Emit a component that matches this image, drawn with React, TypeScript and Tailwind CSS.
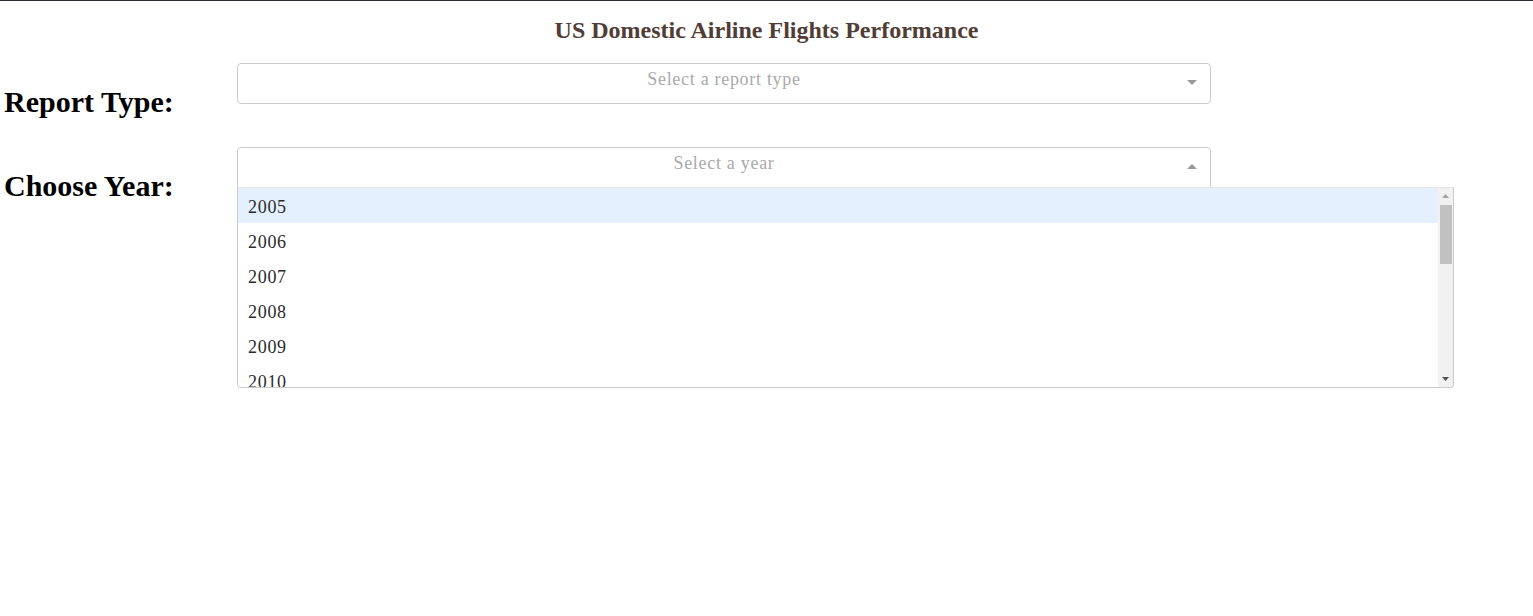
import React from "react";

const serif = { fontFamily: '"Liberation Serif", "Times New Roman", serif' };

function Arrow({ up }: { up?: boolean }) {
  return (
    <svg width="10" height="5" viewBox="0 0 10 5" className="block">
      {up ? <polygon points="0,5 10,5 5,0" fill="#999" /> : <polygon points="0,0 10,0 5,5" fill="#999" />}
    </svg>
  );
}

export default function App() {
  const years = ["2005", "2006", "2007", "2008", "2009", "2010", "2011", "2012"];
  return (
    <div className="min-h-[616px] bg-white text-black" style={serif}>
      <div className="h-px bg-[#2b2d35]" />
      <h1 className="pt-[15px] mb-[19px] text-center text-[24px] leading-[28px] font-bold text-[#503D36]">
        US Domestic Airline Flights Performance
      </h1>

      <div className="flex h-[84px]">
        <div className="w-[237px] shrink-0 pl-[4px] pt-[22px] text-[30px] leading-[33px] font-bold">Report Type:</div>
        <div className="w-[974px] h-[41px] border border-[#ccc] rounded-[4px] flex">
          <div className="flex-1 pl-[31px] text-center text-[18px] tracking-[0.7px] leading-[20px] pt-[5px] text-[#aaa]">Select a report type</div>
          <div className="w-[31px] flex items-start justify-start pt-[16px] pl-[8px]">
            <Arrow />
          </div>
        </div>
      </div>

      <div className="flex h-[84px]">
        <div className="w-[237px] shrink-0 pl-[4px] pt-[22px] text-[30px] leading-[33px] font-bold">Choose Year:</div>
        <div className="relative">
          <div className="w-[974px] h-[41px] border border-[#ccc] rounded-t-[4px] flex bg-white">
            <div className="flex-1 pl-[31px] text-center text-[18px] tracking-[0.7px] leading-[20px] pt-[5px] text-[#aaa]">Select a year</div>
            <div className="w-[31px] flex items-start justify-start pt-[16px] pl-[8px]">
              <Arrow up />
            </div>
          </div>
          <div className="absolute left-0 top-[40px] w-[1217px] h-[201px] border border-[#ccc] border-t-[#e6e6e6] rounded-b-[4px] bg-white flex overflow-hidden">
            <div className="flex-1 overflow-hidden">
              {years.map((y, i) => (
                <div
                  key={y}
                  className={`h-[35px] pl-[10px] pt-[10px] text-[18px] tracking-[0.7px] leading-[18px] text-[#2a2a2a] ${i === 0 ? "bg-[#e4f0fd]" : ""}`}
                >
                  {y}
                </div>
              ))}
            </div>
            <div className="w-[15px] bg-[#f1f1f1] flex flex-col items-center">
              <div className="h-[16px] flex items-center justify-center">
                <svg width="7" height="4" viewBox="0 0 7 4"><polygon points="0,4 7,4 3.5,0" fill="#a3a3a3" /></svg>
              </div>
              <div className="w-[12px] h-[59px] mt-[1px] bg-[#c1c1c1]" />
              <div className="flex-1" />
              <div className="h-[16px] flex items-center justify-center">
                <svg width="7" height="4" viewBox="0 0 7 4"><polygon points="0,0 7,0 3.5,4" fill="#505050" /></svg>
              </div>
            </div>
          </div>
        </div>
      </div>
    </div>
  );
}
